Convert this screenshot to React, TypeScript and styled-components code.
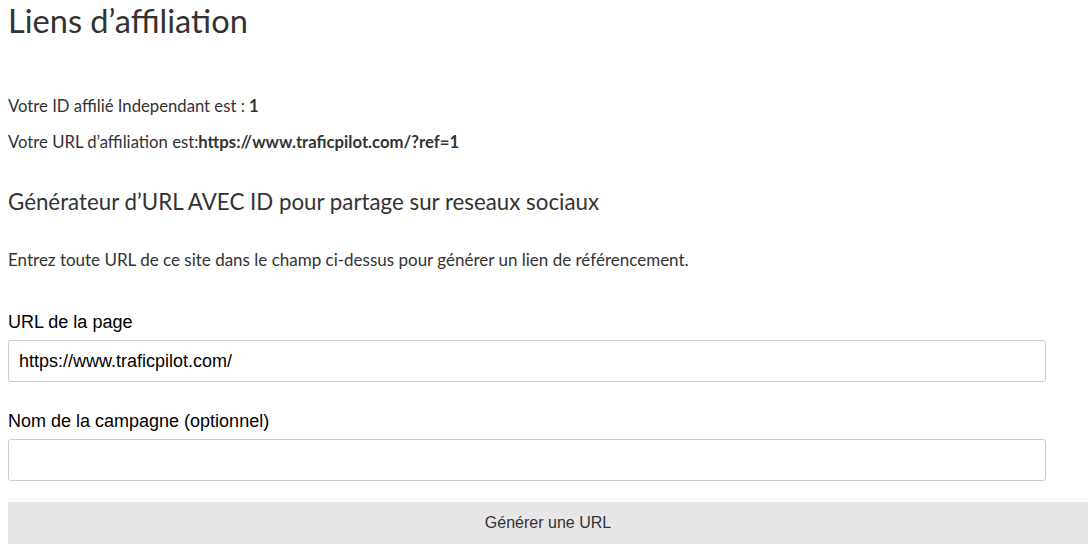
import { useState } from "react";
import styled, { createGlobalStyle } from "styled-components";

const GlobalStyle = createGlobalStyle`
  body {
    margin: 0;
    background: #fff;
    font-family: "Source Sans Pro", Lato, "Liberation Sans", sans-serif;
    color: #333;
  }
`;

export default function App() {
  const [url, setUrl] = useState("https://www.traficpilot.com/");
  const [campaign, setCampaign] = useState("");

  return (
    <Page>
      <GlobalStyle />
      <Title>Liens d’affiliation</Title>

      <Info>
        Votre ID affilié Independant est : <strong>1</strong>
      </Info>
      <Info>
        Votre URL d’affiliation est:<strong>https://www.traficpilot.com/?ref=1</strong>
      </Info>

      <SubTitle>Générateur d’URL AVEC ID pour partage sur reseaux sociaux</SubTitle>
      <Hint>
        Entrez toute URL de ce site dans le champ ci-dessus pour générer un lien de référencement.
      </Hint>

      <Form onSubmit={(e) => e.preventDefault()}>
        <Field>
          <Label htmlFor="page-url">URL de la page</Label>
          <Input id="page-url" value={url} onChange={(e) => setUrl(e.target.value)} />
        </Field>
        <Field>
          <Label htmlFor="campaign">Nom de la campagne (optionnel)</Label>
          <Input
            id="campaign"
            value={campaign}
            onChange={(e) => setCampaign(e.target.value)}
          />
        </Field>
        <GenerateButton type="submit">Générer une URL</GenerateButton>
      </Form>
    </Page>
  );
}

const Page = styled.div`
  padding: 0 3px 0 8px;
  width: 1080px;
`;

const Title = styled.h1`
  margin: 0;
  padding-top: 2px;
  font-size: 32.6px;
  line-height: 38px;
  font-weight: 400;
  color: #333;
`;

const Info = styled.p`
  margin: 0;
  font-size: 16.7px;
  line-height: 36px;
  color: #333;

  &:first-of-type {
    margin-top: 48px;
  }

  strong {
    font-weight: 700;
  }
`;

const SubTitle = styled.h3`
  margin: 27px 0 0;
  font-size: 22.3px;
  line-height: 30px;
  font-weight: 400;
  color: #333;
`;

const Hint = styled.p`
  margin: 31px 0 0;
  font-size: 17px;
  line-height: 24px;
  color: #333;
`;

const Form = styled.form`
  display: flex;
  flex-direction: column;
  margin-top: 40px;
`;

const Field = styled.div`
  display: flex;
  flex-direction: column;
  gap: 8px;
  margin-bottom: 29px;
  width: 1038px;

  &:last-of-type {
    margin-bottom: 19px;
  }
`;

const Label = styled.label`
  font-family: "Liberation Sans", Arial, sans-serif;
  font-size: 18px;
  line-height: 20px;
  color: #000;
`;

const Input = styled.input`
  box-sizing: border-box;
  height: 42px;
  padding: 0 10px;
  border: 1px solid #ccc;
  border-radius: 3px;
  font-family: "Liberation Sans", Arial, sans-serif;
  font-size: 18px;
  color: #000;
  background: #fff;
  outline: none;
`;

const GenerateButton = styled.button`
  margin-top: 2px;
  height: 42px;
  width: 1080px;
  border: none;
  background: #e6e6e6;
  font-family: "Liberation Sans", Arial, sans-serif;
  font-size: 16px;
  color: #333;
  cursor: pointer;
`;
